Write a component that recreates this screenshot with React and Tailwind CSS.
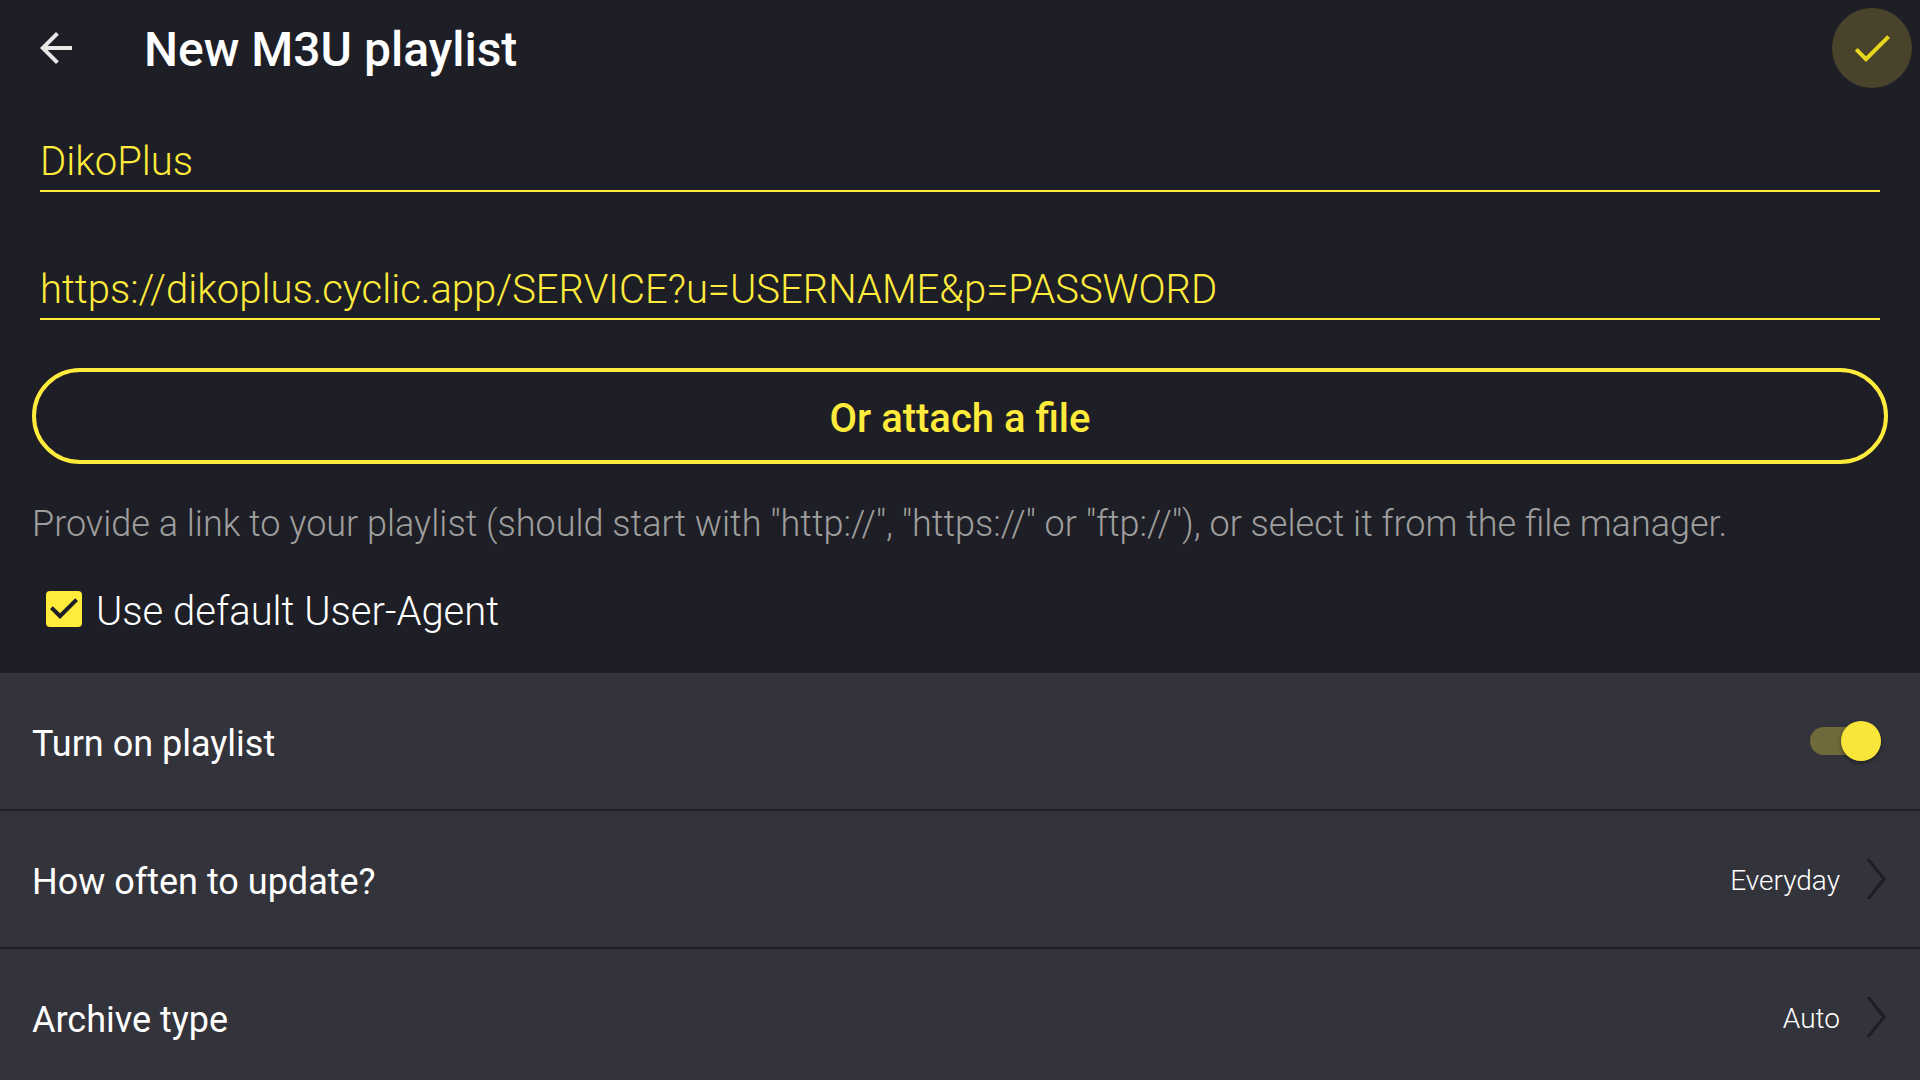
import { useState } from "react";

const inputClass =
  "block h-[52px] w-full border-b-2 border-[#ffeb3b] bg-transparent pb-2 text-[40px] leading-[48px] font-light text-[#ffeb3b] outline-none";

function BackIcon() {
  return (
    <svg viewBox="0 0 24 24" className="size-12" fill="currentColor" aria-hidden="true">
      <path d="M20 11H7.83l5.59-5.59L12 4l-8 8 8 8 1.41-1.41L7.83 13H20v-2z" />
    </svg>
  );
}

function SaveIcon() {
  return (
    <svg viewBox="0 0 24 24" className="size-12" fill="currentColor" aria-hidden="true">
      <path d="M9 16.17 4.83 12l-1.42 1.41L9 19 21 7l-1.41-1.41z" />
    </svg>
  );
}

function TickMark() {
  return (
    <svg
      viewBox="3 3 18 18"
      className="pointer-events-none invisible col-start-1 row-start-1 size-9 text-[#1e1e26] peer-checked:visible"
      fill="currentColor"
      aria-hidden="true"
    >
      <path d="M10 17l-5-5 1.41-1.41L10 14.17l7.59-7.59L19 8l-9 9z" />
    </svg>
  );
}

function Chevron() {
  return (
    <svg viewBox="0 0 20 40" className="h-10 w-5 text-[#1e1e26]" fill="currentColor" aria-hidden="true">
      <path d="M0 0h4l16 20L4 40H0l16-20z" />
    </svg>
  );
}

function LinkRow({ label, value }) {
  return (
    <button
      type="button"
      className="flex h-[138px] w-full shrink-0 items-center border-b-2 border-[#1e1e26] pr-[34px] pl-8 text-left"
    >
      <span className="grow pt-1.5 text-4xl">{label}</span>
      <span className="pt-1 text-[28px] leading-8 font-light">{value}</span>
      <span className="ml-[26px]">
        <Chevron />
      </span>
    </button>
  );
}

export default function App() {
  const [name, setName] = useState("DikoPlus");
  const [url, setUrl] = useState("https://dikoplus.cyclic.app/SERVICE?u=USERNAME&p=PASSWORD");
  const [agent, setAgent] = useState(true);
  const [enabled, setEnabled] = useState(true);

  return (
    <div className="flex h-screen flex-col overflow-y-auto bg-[#1e1e26] font-['Roboto',sans-serif] text-white [scrollbar-width:none]">
      <header className="flex h-24 shrink-0 items-center pr-2 pl-8">
        <button type="button" aria-label="Back" className="text-[#e8e8e9]">
          <BackIcon />
        </button>
        <h1 className="ml-16 grow pt-1 text-5xl font-medium">New M3U playlist</h1>
        <button
          type="button"
          aria-label="Save"
          className="flex size-20 items-center justify-center rounded-full bg-[#48432a] text-[#e8d71c]"
        >
          <SaveIcon />
        </button>
      </header>

      <main className="flex grow flex-col">
        <form className="flex flex-col px-8" onSubmit={(e) => e.preventDefault()}>
          <div className="flex flex-col gap-[76px] px-2 pt-11">
            <input
              aria-label="Playlist name"
              className={inputClass}
              value={name}
              onChange={(e) => setName(e.target.value)}
            />
            <input
              aria-label="Playlist link"
              className={inputClass}
              value={url}
              onChange={(e) => setUrl(e.target.value)}
            />
          </div>
          <button
            type="button"
            className="mt-12 h-24 rounded-full border-4 border-[#ffeb3b] pt-1.5 text-[40px] leading-[48px] font-medium text-[#ffeb3b]"
          >
            Or attach a file
          </button>
          <p className="mt-10 text-4xl font-light text-[#9e9e9e]">
            Provide a link to your playlist (should start with "http://", "https://" or "ftp://"), or select it from the
            file manager.
          </p>
          <label className="mt-[41px] mb-10 flex h-12 items-center self-start pl-3.5">
            <span className="grid size-9 place-items-center">
              <input
                type="checkbox"
                checked={agent}
                onChange={(e) => setAgent(e.target.checked)}
                className="peer col-start-1 row-start-1 size-9 appearance-none rounded border-4 border-[#ffeb3b] checked:bg-[#ffeb3b]"
              />
              <TickMark />
            </span>
            <span className="ml-3.5 pt-1.5 text-[40px] leading-[48px] font-light">Use default User-Agent</span>
          </label>
        </form>

        <section className="flex grow flex-col bg-[#33333b]">
          <label className="flex h-[138px] shrink-0 items-center border-b-2 border-[#1e1e26] pr-[39px] pl-8">
            <span className="grow pt-1.5 text-4xl">Turn on playlist</span>
            <input
              type="checkbox"
              role="switch"
              checked={enabled}
              onChange={(e) => setEnabled(e.target.checked)}
              className="relative h-7 w-[71px] appearance-none rounded-full bg-[#55555c] before:absolute before:-top-1.5 before:left-0 before:size-10 before:rounded-full before:bg-[#bdbdbd] before:shadow-[0_2px_4px_rgba(0,0,0,0.4)] checked:bg-[#706939] checked:before:left-[31px] checked:before:bg-[#fae53a]"
            />
          </label>
          <LinkRow label="How often to update?" value="Everyday" />
          <LinkRow label="Archive type" value="Auto" />
        </section>
      </main>
    </div>
  );
}
